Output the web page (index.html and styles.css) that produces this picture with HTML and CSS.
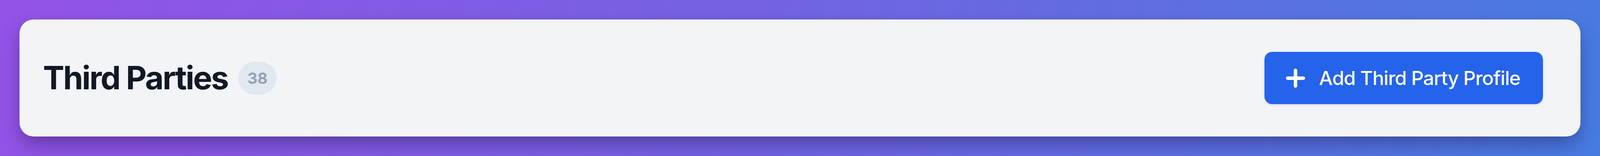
FILE: index.html
```html
<!DOCTYPE html>
<html lang="en">
<head>
<meta charset="utf-8">
<title>Third Parties</title>
<link rel="stylesheet" href="styles.css">
</head>
<body>
  <div class="page">
    <header class="card">
      <div class="title-group">
        <h1 class="title">Third Parties</h1>
        <span class="count">38</span>
      </div>
      <button class="add-btn" type="button">
        <svg class="plus" width="49" height="49" viewBox="0 0 49 49" aria-hidden="true">
          <path d="M24.5 4.5V44.5M4.5 24.5H44.5" fill="none" stroke="#ffffff" stroke-width="9" stroke-linecap="round"/>
        </svg>
        <span class="add-label">Add Third Party Profile</span>
      </button>
    </header>
  </div>
</body>
</html>
```
FILE: styles.css
```css
* { box-sizing: border-box; }
html, body { margin: 0; padding: 0; }
html {
  min-height: 100%;
  background: linear-gradient(100deg, #9353e6 0%, #7562e3 45%, #487be1 100%);
}
body {
  font-family: Inter, "Noto Sans", "Liberation Sans", sans-serif;
}
.page {
  padding: 50px;
}
.card {
  height: 300px;
  background: #f3f4f6;
  border-radius: 36px;
  display: flex;
  align-items: center;
  justify-content: space-between;
  padding: 0 96px 0 60px;
  box-shadow: 0 22px 50px -8px rgba(20, 10, 60, 0.45);
}
.title-group {
  display: flex;
  align-items: center;
  gap: 27px;
}
.title {
  margin: 0;
  font-size: 82px;
  font-weight: 700;
  color: #111827;
  letter-spacing: -3px;
  line-height: 1;
}
.count {
  height: 85px;
  padding: 0 23px;
  display: inline-flex;
  align-items: center;
  border-radius: 999px;
  background: #e2e8f0;
  color: #94a3b8;
  font-size: 40px;
  font-weight: 700;
}
.add-btn {
  height: 134px;
  display: flex;
  align-items: center;
  gap: 36px;
  padding: 0 58px 0 55px;
  border: none;
  border-radius: 20px;
  background: #2563eb;
  color: #ffffff;
  font-family: inherit;
  box-shadow: 0 2px 6px rgba(15, 23, 42, 0.12);
}
.plus { display: block; flex: none; }
.add-label {
  font-size: 50px;
  font-weight: 500;
  letter-spacing: -1.2px;
  line-height: 1;
}
```
